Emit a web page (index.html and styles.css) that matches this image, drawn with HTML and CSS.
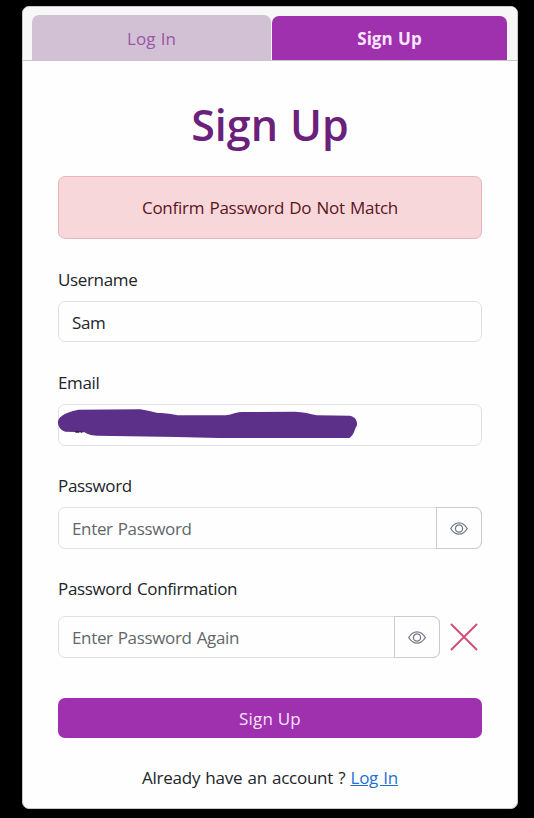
FILE: index.html
```html
<!DOCTYPE html>
<html lang="en">
<head>
<meta charset="utf-8">
<title>Sign Up</title>
<link rel="stylesheet" href="styles.css">
</head>
<body>
<main class="card">
  <nav class="tabs">
    <a class="tab">Log In</a>
    <a class="tab active">Sign Up</a>
  </nav>
  <form class="content">
    <h1><span>Sign Up</span></h1>
    <div class="alert">Confirm Password Do Not Match</div>
    <div class="field username">
      <label>Username</label>
      <div class="control"><span>Sam</span></div>
    </div>
    <div class="field">
      <label>Email</label>
      <div class="control email">
        <svg class="redaction" viewBox="54 130 900 90"><path d="M76 198C58 194 50 175 56 161C65 145 90 137 115 132L300 131C325 134 340 141 355 142C380 142 395 145 412 149H557C575 148 580 141 605 139L765 138C790 139 810 144 830 149L930 150C948 154 954 169 950 181C944 187 945 205 928 217H535L410 214L170 210C152 209 142 206 134 200Z" fill="#5c3089"/><path d="M106 199h12M122 199h5" stroke="#242038" stroke-width="4"/></svg>
      </div>
    </div>
    <div class="field">
      <label>Password</label>
      <div class="control placeholder"><span>Enter Password</span>
        <div class="toggle"><svg viewBox="0 0 18 13"><path d="M.7 6.5Q4.2.8 9 .8T17.3 6.5Q13.8 12.2 9 12.2T.7 6.5Z"/><circle cx="9" cy="6.5" r="3.6"/></svg></div>
      </div>
    </div>
    <div class="field confirmation">
      <label>Password Confirmation</label>
      <div class="row">
        <div class="control placeholder"><span>Enter Password Again</span>
          <div class="toggle"><svg viewBox="0 0 18 13"><path d="M.7 6.5Q4.2.8 9 .8T17.3 6.5Q13.8 12.2 9 12.2T.7 6.5Z"/><circle cx="9" cy="6.5" r="3.6"/></svg></div>
        </div>
        <svg class="cross" viewBox="0 0 28 28"><path d="M1.5 1.5 26.5 26.5M26.5 1.5 1.5 26.5"/></svg>
      </div>
    </div>
    <button type="button">Sign Up</button>
    <p class="login">Already have an account ? <a>Log In</a></p>
  </form>
</main>
</body>
</html>
```
FILE: styles.css
```css
* { box-sizing: border-box; }
body {
  margin: 0;
  height: 818px;
  padding: 6px 16px 9px 22px;
  background: #000;
  color: #212529;
  font: 400 17px/24px "Open Sans", "Noto Sans", sans-serif;
  letter-spacing: -0.35px;
  word-spacing: 1px;
}
.card {
  height: 803px;
  background: #fefefe;
  border: 1px solid #c9c9c9;
  border-radius: 7px;
  overflow: hidden;
}
.tabs {
  display: flex;
  gap: 1px;
  height: 54px;
  padding: 8px 10px 0 9px;
  background: #f7f7f7;
  border-bottom: 1px solid #c8c8c8;
}
.tab {
  width: 239px;
  height: 46px;
  border-radius: 7px 7px 0 0;
  background: #d2c1d5;
  color: #9b55a5;
  text-align: center;
  line-height: 47px;
  letter-spacing: 0;
}
.tab.active {
  width: 235px;
  height: 44px;
  margin-top: 1px;
  background: #9f30ae;
  color: #fbe4ff;
  font-weight: 700;
  line-height: 45px;
  letter-spacing: 0;
}
.content { padding: 35px 35px 0; }
h1 {
  margin: 0;
  height: 80px;
  color: #6b207b;
  font-size: 43px;
  font-weight: 600;
  line-height: 58px;
  letter-spacing: 0;
  text-align: center;
}
.alert {
  height: 63px;
  border: 1px solid #e9b5bd;
  border-radius: 7px;
  background: #f8d7da;
  color: #58151c;
  text-align: center;
  line-height: 61px;
  letter-spacing: -0.25px;
}
.field { margin-top: 28px; }
.username { margin-top: 29px; }
.username + .field { margin-top: 29px; }
label { display: block; height: 33px; line-height: 24px; }
.control {
  position: relative;
  display: flex;
  height: 42px;
  flex: 1;
  border: 1px solid #dee2e3;
  border-radius: 7px;
  line-height: 41px;
}
.username .control { height: 41px; }
.control > span { padding-left: 13px; }
.placeholder { color: #62676b; }
.toggle {
  display: flex;
  align-items: center;
  justify-content: center;
  width: 46px;
  height: 42px;
  margin: -1px -1px 0 auto;
  border: 1px solid #c8cbcf;
  border-radius: 0 7px 7px 0;
}
.toggle svg {
  width: 18px;
  height: 13px;
  fill: none;
  stroke: #727b85;
  stroke-width: 1.3;
}
.redaction {
  position: absolute;
  left: -1px;
  top: 4px;
  width: 300px;
  height: 30px;
}
.confirmation label { height: 39px; }
.row { display: flex; }
.cross {
  width: 28px;
  height: 28px;
  margin: 7px 4px 0 10px;
  fill: none;
  stroke: #d05078;
  stroke-width: 2;
  stroke-linecap: round;
}
button {
  display: block;
  width: 100%;
  height: 40px;
  margin-top: 40px;
  padding: 1px 0 0;
  border: 0;
  border-radius: 7px;
  background: #9f30ae;
  color: #fbe4ff;
  font: inherit;
  letter-spacing: 0.2px;
}
.login { margin: 28px 0 0; text-align: center; letter-spacing: -0.25px; word-spacing: 1px; }
.login a { color: #1b72d4; text-decoration: underline; }
```
